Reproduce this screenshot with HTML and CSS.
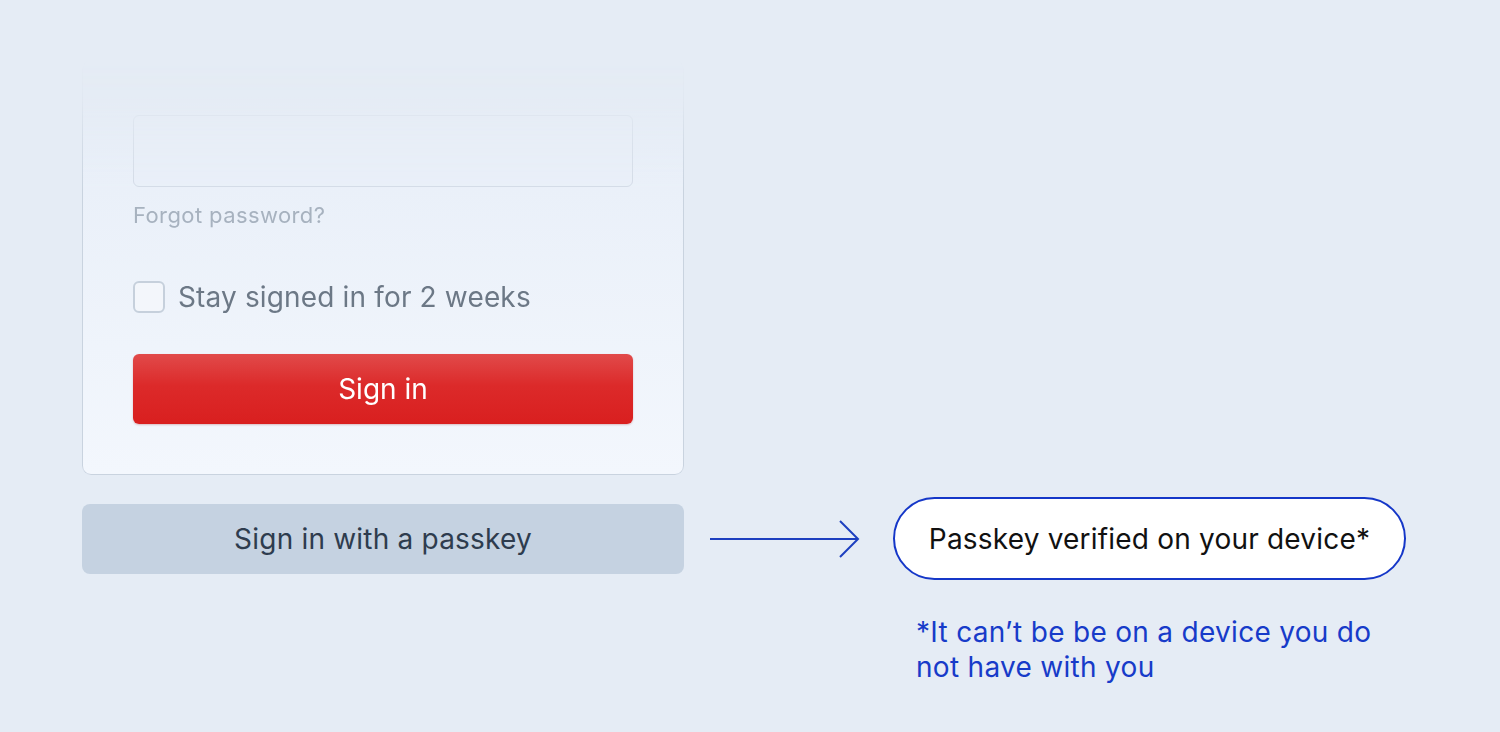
FILE: index.html
```html
<!DOCTYPE html>
<html lang="en">
<head>
<meta charset="utf-8">
<title>Sign in with a passkey</title>
<link rel="stylesheet" href="styles.css">
</head>
<body>
<main class="scene">
  <section class="card">
    <div class="field"></div>
    <a class="forgot" href="#">Forgot password?</a>
    <label class="stay">
      <span class="box"></span>
      <span class="stay-text">Stay signed in for 2 weeks</span>
    </label>
    <button class="btn-signin" type="button">Sign in</button>
  </section>
  <div class="flow">
    <button class="btn-passkey" type="button">Sign in with a passkey</button>
    <svg class="arrow" width="150" height="40" viewBox="0 0 150 40" aria-hidden="true">
      <path d="M0 20 H147" fill="none" stroke="#1d3fbf" stroke-width="2"/>
      <path d="M130 2 L148 20 L130 38" fill="none" stroke="#1d3fbf" stroke-width="2" stroke-linejoin="miter"/>
    </svg>
    <div class="pill">Passkey verified on your device*</div>
    <p class="note">*It can’t be be on a device you do not have with you</p>
  </div>
</main>
</body>
</html>
```

FILE: styles.css
```css
html, body {
  margin: 0;
  padding: 0;
}
body {
  background: #e5ecf5;
  font-family: Inter, "Noto Sans", "Liberation Sans", sans-serif;
  width: 1500px;
  height: 732px;
  overflow: hidden;
}
.scene {
  padding: 60px 0 0 82px;
}
.card {
  box-sizing: border-box;
  width: 602px;
  padding: 54px 50px 50px 50px;
  border: 1px solid #c9d3df;
  border-radius: 9px;
  background: linear-gradient(to bottom, #e6edf7 0%, #f3f7fd 100%);
  box-shadow: 0 4px 18px rgba(120, 140, 170, 0.18);
  -webkit-mask-image: linear-gradient(to bottom, rgba(0,0,0,0) 0px, rgba(0,0,0,0.15) 40px, rgba(0,0,0,0.6) 80px, rgba(0,0,0,1) 130px);
  mask-image: linear-gradient(to bottom, rgba(0,0,0,0) 0px, rgba(0,0,0,0.15) 40px, rgba(0,0,0,0.6) 80px, rgba(0,0,0,1) 130px);
  display: flex;
  flex-direction: column;
  align-items: flex-start;
}
.field {
  box-sizing: border-box;
  width: 500px;
  height: 72px;
  border: 1.5px solid #d3dbe6;
  border-radius: 6px;
  background: #e9eff8;
}
.forgot {
  margin-top: 16px;
  font-size: 22px;
  line-height: 24px;
  letter-spacing: 0.4px;
  color: #a7b2bf;
  text-decoration: none;
}
.stay {
  margin-top: 54px;
  display: flex;
  align-items: center;
  gap: 13px;
}
.box {
  box-sizing: border-box;
  width: 32px;
  height: 32px;
  border: 2px solid #c6d0dc;
  border-radius: 6px;
  background: #f3f6fb;
}
.stay-text {
  font-size: 28px;
  line-height: 32px;
  letter-spacing: 0.15px;
  color: #6c7886;
}
.btn-signin {
  margin-top: 41px;
  width: 500px;
  height: 70px;
  border: 0;
  border-radius: 6px;
  background: linear-gradient(to bottom, #e14a4a 0%, #dc2a2a 45%, #d91f1f 100%);
  color: #ffffff;
  font-family: inherit;
  font-size: 28px;
  box-shadow: 0 1px 2px rgba(150, 20, 20, 0.25);
}
.flow {
  margin-top: 22px;
  display: grid;
  grid-template-columns: 602px 209px 513px;
  justify-content: start;
  align-items: center;
}
.btn-passkey {
  width: 602px;
  height: 70px;
  border: 0;
  border-radius: 8px;
  background: #c5d2e1;
  color: #2e3c4e;
  font-family: inherit;
  font-size: 28px;
  letter-spacing: 0.2px;
}
.arrow {
  margin-left: 26px;
  display: block;
}
.pill {
  box-sizing: border-box;
  height: 83px;
  border: 2.5px solid #1537c8;
  border-radius: 42px;
  background: #ffffff;
  color: #111111;
  font-size: 28px;
  letter-spacing: 0.2px;
  display: flex;
  align-items: center;
  justify-content: center;
}
.note {
  grid-column: 3;
  grid-row: 2;
  margin: 35px 0 0 23px;
  width: 480px;
  font-size: 28px;
  line-height: 35px;
  letter-spacing: 0.3px;
  color: #173bc9;
}
```
